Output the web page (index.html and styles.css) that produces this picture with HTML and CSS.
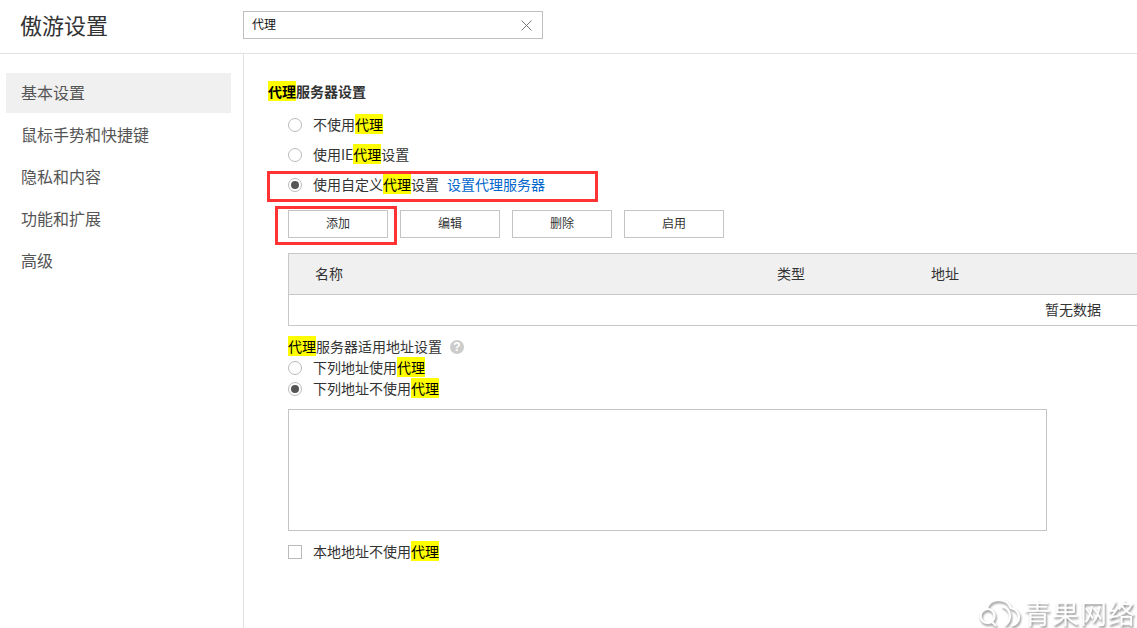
FILE: index.html
```html
<!DOCTYPE html>
<html lang="zh-CN">
<head>
<meta charset="utf-8">
<title>傲游设置</title>
<link rel="stylesheet" href="styles.css">
</head>
<body>
<header class="topbar">
  <h1 class="title">傲游设置</h1>
  <div class="search">
    <span class="search-text">代理</span>
    <svg class="search-clear" width="11" height="11" viewBox="0 0 11 11"><path d="M.5.5l10 10M10.5.5l-10 10" stroke="#777" fill="none"/></svg>
  </div>
</header>
<div class="layout">
  <nav class="sidebar">
    <a class="nav-item active">基本设置</a>
    <a class="nav-item">鼠标手势和快捷键</a>
    <a class="nav-item">隐私和内容</a>
    <a class="nav-item">功能和扩展</a>
    <a class="nav-item">高级</a>
  </nav>
  <main class="content">
    <h2 class="section-title"><mark class="hl">代理</mark>服务器设置</h2>
    <div class="options">
      <div class="row"><span class="radio"></span><span class="label">不使用<mark class="hl">代理</mark></span></div>
      <div class="row"><span class="radio"></span><span class="label">使用IE<mark class="hl">代理</mark>设置</span></div>
      <div class="row annotated"><span class="radio checked"></span><span class="label">使用自定义<mark class="hl">代理</mark>设置</span><a class="label link">设置代理服务器</a><span class="annot annot-row"></span></div>
    </div>
    <div class="buttons">
      <div class="btn annotated">添加<span class="annot annot-btn"></span></div>
      <div class="btn">编辑</div>
      <div class="btn">删除</div>
      <div class="btn">启用</div>
    </div>
    <div class="table">
      <div class="thead">
        <span class="col col-name">名称</span>
        <span class="col col-type">类型</span>
        <span class="col">地址</span>
      </div>
      <div class="tbody">暂无数据</div>
    </div>
    <div class="addr-label"><span class="label"><mark class="hl">代理</mark>服务器适用地址设置</span><span class="help">?</span></div>
    <div class="row-tight"><span class="radio"></span><span class="label">下列地址使用<mark class="hl">代理</mark></span></div>
    <div class="row-tight"><span class="radio checked"></span><span class="label">下列地址不使用<mark class="hl">代理</mark></span></div>
    <div class="textbox"></div>
    <div class="check-row"><span class="checkbox"></span><span class="label">本地地址不使用<mark class="hl">代理</mark></span></div>
  </main>
</div>
<div class="watermark">
  <svg class="wm-logo" width="44" height="28" viewBox="0 0 44 28">
    <g fill="none" stroke="#fff" stroke-width="2.200">
      <path d="M9 9C11 3 16 1 20 1c6 0 11 3 13 8 5 1 8 5 8 9 0 5-4 8-8 8.500"/>
      <path d="M24 7c6 2 8 6 8 10 0 4-2 7-5 9.500"/>
      <circle cx="9.500" cy="17" r="7"/>
      <path d="M13 22l5 5"/>
    </g>
  </svg>
  <span class="wm-text">青果网络</span>
</div>
</body>
</html>
```
FILE: styles.css
```css
html, body {
  margin: 0;
  height: 628px;
  overflow: hidden;
  background: #fff;
}
body {
  font-family: "Noto Sans CJK SC", "Liberation Sans", sans-serif;
  font-size: 14px;
  line-height: 20px;
  color: #333;
  position: relative;
}
.topbar {
  height: 53px;
  border-bottom: 1px solid #e2e2e2;
  display: flex;
  align-items: center;
}
.title {
  margin: 0 0 6px 20px;
  width: 223px;
  font-size: 22px;
  line-height: 30px;
  font-weight: 400;
}
.search {
  width: 280px;
  height: 26px;
  margin-bottom: 3px;
  border: 1px solid #bfbfbf;
  display: flex;
  align-items: center;
  justify-content: space-between;
  padding: 0 10px 0 8px;
  font-size: 12px;
  color: #111;
}
.search-text { margin-top: -2px; }
.layout {
  display: flex;
  height: 574px;
}
.sidebar {
  width: 225px;
  padding: 19px 12px 0 6px;
  border-right: 1px solid #e2e2e2;
  display: flex;
  flex-direction: column;
  gap: 2px;
  flex: none;
}
.nav-item {
  height: 40px;
  line-height: 38px;
  padding-left: 15px;
  font-size: 16px;
  color: #555;
}
.nav-item.active { background: #f0f0f0; }
.content {
  flex: 1;
  padding: 28px 0 0 24px;
  min-width: 0;
}
.section-title {
  margin: 0 0 10px;
  line-height: 18px;
  font-weight: 700;
  font-size: 14px;
}
.hl { background: #ff0; color: #000; }
.options { padding-left: 20px; }
.row, .row-tight, .check-row, .addr-label {
  display: flex;
  align-items: center;
  white-space: nowrap;
}
.label { margin-top: -2px; }
.row { height: 30px; width: 330px; }
.annotated { position: relative; }
.annot {
  position: absolute;
  border: 3px solid #f33;
  pointer-events: none;
}
.annot-row { left: -21px; top: 1px; bottom: -2px; width: 325px; }
.annot-btn { left: -14px; top: -5px; width: 116px; height: 33px; }
.radio {
  box-sizing: border-box;
  width: 14px;
  height: 14px;
  border: 1px solid #bbb;
  border-radius: 50%;
  margin-right: 11px;
  flex: none;
  display: flex;
  align-items: center;
  justify-content: center;
}
.radio.checked::before {
  content: "";
  width: 8px;
  height: 8px;
  border-radius: 50%;
  background: #555;
}
.link { color: #06c; margin-left: 8px; }
.buttons {
  display: flex;
  gap: 12px;
  margin: 10px 0 15px 20px;
}
.btn {
  box-sizing: border-box;
  width: 100px;
  height: 28px;
  border: 1px solid #c4c4c4;
  font-size: 12px;
  line-height: 24px;
  text-align: center;
}
.table {
  margin-left: 20px;
  border: 1px solid #c8c8c8;
  border-right: 0;
}
.thead {
  box-sizing: border-box;
  height: 41px;
  padding: 0 0 3px 26px;
  background: #f0f0f0;
  border-bottom: 1px solid #c8c8c8;
  display: flex;
  align-items: center;
}
.col-name { width: 462px; }
.col-type { width: 154px; }
.tbody {
  height: 30px;
  line-height: 28px;
  padding-left: 756px;
}
.addr-label { margin: 11px 0 0 20px; height: 20px; }
.help {
  width: 14px;
  height: 14px;
  border-radius: 50%;
  background: #ccc;
  color: #fff;
  font-size: 12px;
  line-height: 14px;
  font-weight: 700;
  text-align: center;
  margin-left: 8px;
  font-family: "Liberation Sans", sans-serif;
}
.row-tight { height: 21px; margin-left: 20px; }
.textbox {
  box-sizing: border-box;
  width: 759px;
  height: 122px;
  margin: 10px 0 11px 20px;
  border: 1px solid #c4c4c4;
}
.check-row { height: 20px; margin-left: 20px; }
.checkbox {
  box-sizing: border-box;
  width: 14px;
  height: 14px;
  border: 1px solid #bbb;
  margin-right: 11px;
}
.watermark {
  position: absolute;
  right: 1px;
  bottom: 1px;
  display: flex;
  align-items: center;
  gap: 2px;
  filter: drop-shadow(1px 2px 1px rgba(0, 0, 0, .45));
}
.wm-text {
  color: #fff;
  font-size: 27px;
  line-height: 28px;
  letter-spacing: 1px;
  white-space: nowrap;
}
```
